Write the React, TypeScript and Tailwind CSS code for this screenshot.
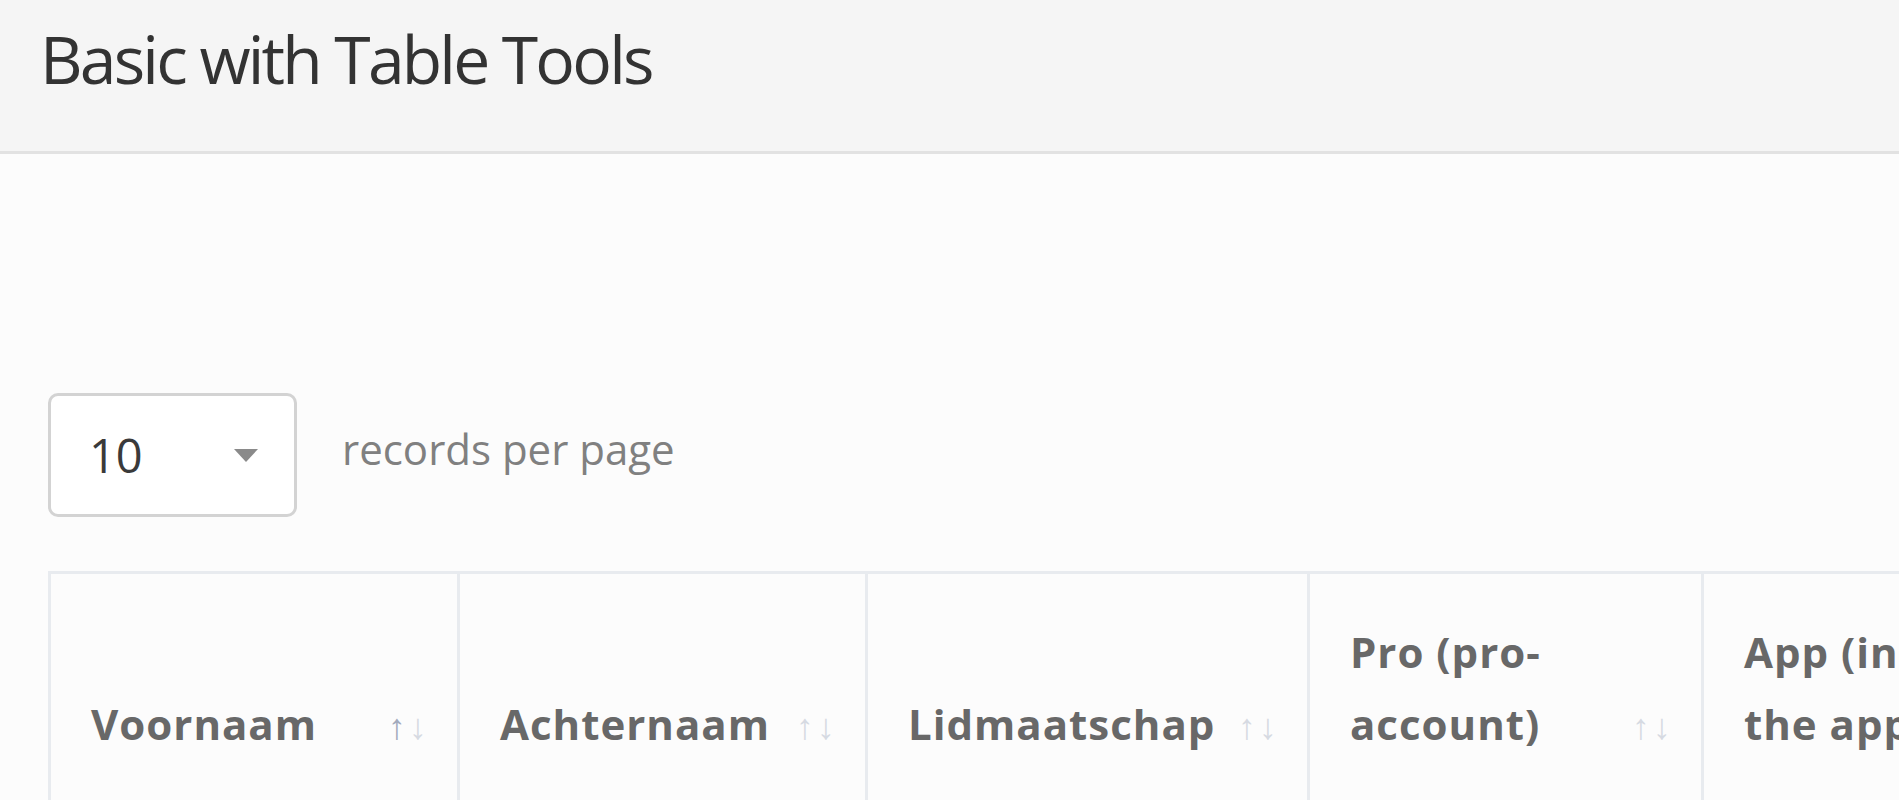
import React from "react";

type Col = { label: string; width: number; sorted?: boolean };

const columns: Col[] = [
  { label: "Voornaam", width: 409, sorted: true },
  { label: "Achternaam", width: 408 },
  { label: "Lidmaatschap", width: 442 },
  { label: "Pro (pro-account)", width: 394 },
  { label: "App (installed the app)", width: 440 },
];

function SortArrows({ sorted }: { sorted?: boolean }) {
  return (
    <span className="absolute right-[29px] bottom-[57px] flex gap-[2px] font-['Liberation_Sans',Arial,sans-serif] text-[36px] font-normal leading-none">
      <span className={sorted ? "text-[#a3abbd]" : "text-[#d6dae2]"}>↑</span>
      <span className="text-[#d6dae2]">↓</span>
    </span>
  );
}

export default function App() {
  return (
    <div className="min-h-screen w-full overflow-hidden bg-[#fcfcfc] font-['Open_Sans',sans-serif]">
      {/* page heading */}
      <div className="h-[154px] bg-[#f5f5f5] border-b-[3px] border-[#e2e2e2] pl-[40px] pt-[25px]">
        <h1 className="text-[66px] leading-[66px] tracking-[-2.8px] text-[#333] font-normal">
          Basic with Table Tools
        </h1>
      </div>

      <div className="pl-[48px] pt-[239px]">
        {/* length selector */}
        <div className="flex items-start">
          <div className="w-[249px] h-[124px] bg-white border-[3px] border-[#d3d3d3] rounded-[10px] flex items-center justify-between pl-[38px] pr-[36px]">
            <span className="text-[47px] text-[#3a3a3a]">10</span>
            <span className="w-0 h-0 border-t-[13px] border-t-[#8a8a8a] border-x-[12px] border-x-transparent" />
          </div>
          <span className="ml-[45px] mt-[35px] text-[42px] leading-[42px] text-[#808080]">
            records per page
          </span>
        </div>

        {/* table */}
        <table className="mt-[54px] table-fixed border-collapse border-[3px] border-[#e8ebef] w-[2093px]">
          <colgroup>
            {columns.map((c) => (
              <col key={c.label} style={{ width: c.width }} />
            ))}
          </colgroup>
          <thead>
            <tr>
              {columns.map((c) => (
                <th
                  key={c.label}
                  className="relative align-bottom text-left border-[3px] border-[#e8ebef] pt-[42px] pb-[42px] pl-[40px] pr-[79px] text-[42px] leading-[72px] tracking-[1px] font-bold text-[#686868]"
                >
                  {c.label}
                  <SortArrows sorted={c.sorted} />
                </th>
              ))}
            </tr>
          </thead>
        </table>
      </div>
    </div>
  );
}
